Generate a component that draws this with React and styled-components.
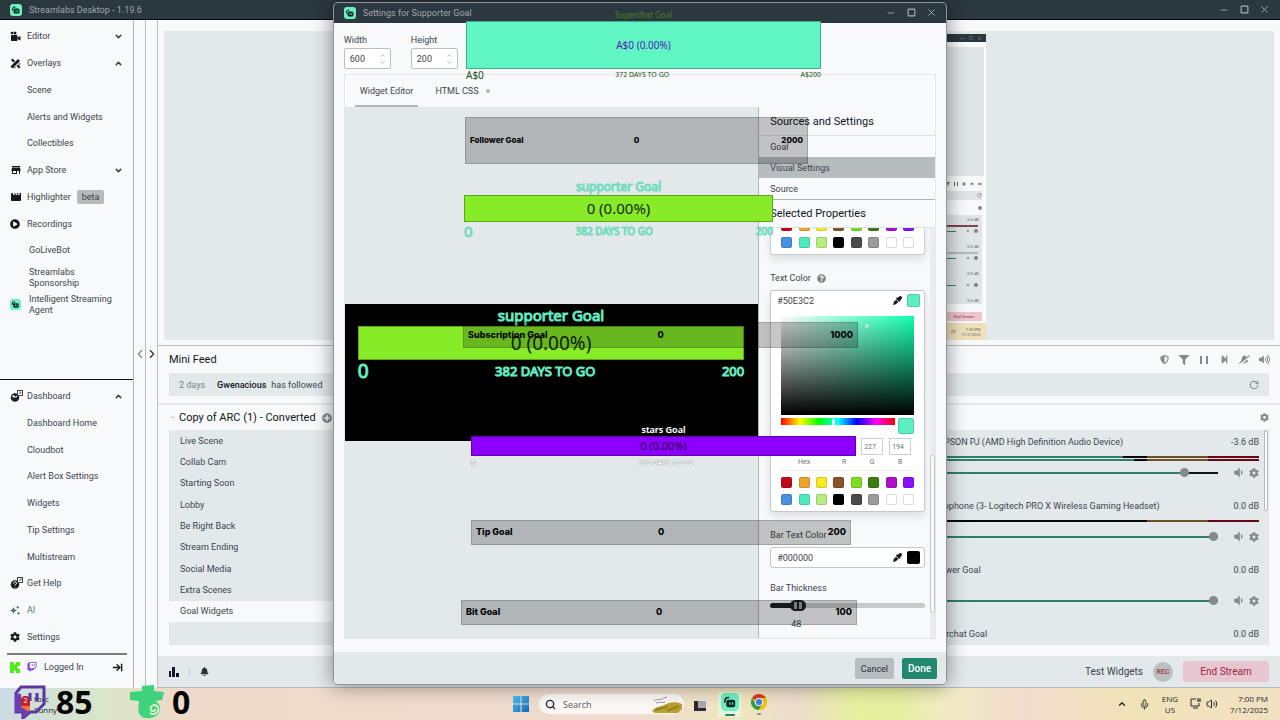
import { useState } from "react";
import styled, { createGlobalStyle } from "styled-components";
import {
  FaBell,
  FaBellSlash,
  FaCog,
  FaEyeDropper,
  FaFilter,
  FaPlayCircle,
  FaPlusCircle,
  FaQuestionCircle,
  FaShieldAlt,
  FaStepForward,
  FaTwitch,
  FaVolumeUp,
} from "react-icons/fa";
import { MdMovie, MdStore, MdVolumeDown } from "react-icons/md";
import {
  ArrowRightToLine,
  ChevronDown,
  ChevronLeft,
  ChevronRight,
  ChevronUp,
  Minus,
  Mic,
  RotateCw,
  Search,
  Square,
  Volume2,
  X,
} from "lucide-react";

const GlobalStyle = createGlobalStyle`
  * {
    box-sizing: border-box;
  }
  body {
    margin: 0;
    font-family: Roboto, "Liberation Sans", sans-serif;
    font-size: 9px;
    color: #3c454b;
    overflow: hidden;
  }
  button, input {
    font: inherit;
    color: inherit;
    margin: 0;
    padding: 0;
    border: none;
    background: none;
  }
  a {
    color: inherit;
    text-decoration: none;
  }
  ul {
    list-style: none;
    margin: 0;
    padding: 0;
  }
  h2 {
    margin: 0;
    font-size: 11px;
    font-weight: 400;
    color: #12181c;
  }
  svg {
    display: block;
    flex: none;
  }
`;

const Desktop = styled.div`
  position: relative;
  display: flex;
  flex-direction: column;
  height: 100vh;
  min-height: 720px;
`;

const TitleBar = styled.header`
  display: flex;
  align-items: center;
  gap: 7px;
  height: 20px;
  padding: 0 11px 0 10px;
  background: #2b383f;
  border-bottom: 1px solid #060a0c;
  color: #a0a7aa;
`;

const DialogTitleBar = styled(TitleBar)`
  padding-right: 10px;
  border-bottom-color: #2b383f;
`;

const WindowControls = styled.div`
  display: flex;
  gap: 10px;
  margin-left: auto;
  color: #aab1b4;
`;

const IconButton = styled.button`
  display: flex;
  align-items: center;
  justify-content: center;
  width: ${({ $size }) => $size || 10}px;
  height: ${({ $size }) => $size || 10}px;
  color: inherit;
`;

const Workspace = styled.div`
  flex: 1;
  display: flex;
  min-height: 0;
  background: #f7f9fb;
`;

/* Side navigation */

const Sidebar = styled.nav`
  display: flex;
  flex-direction: column;
  width: 134px;
  padding-top: 3px;
  border-right: 1px solid #b1b6b9;
`;

const Menu = styled.ul`
  display: grid;
  grid-auto-rows: 1fr;
  height: ${({ $height }) => $height}px;
`;

const MenuItem = styled.li`
  display: flex;
  align-items: center;
  padding: 0 10px;
`;

const MenuLink = styled.a`
  display: flex;
  align-items: center;
  flex: 1;
  color: ${({ $accent }) => ($accent ? "#4f7a70" : "#3c454b")};
`;

const MenuIcon = styled.span`
  width: 17px;
  color: #16191c;
`;

const Beta = styled.span`
  margin-left: 6px;
  padding: 0 5px;
  line-height: 14px;
  border-radius: 2px;
  background: #b5babc;
`;

const AppList = styled.ul`
  padding: 0 8px 0 10px;
`;

const AppItem = styled.li`
  display: flex;
  align-items: center;
  height: 27px;
  line-height: 11px;
`;

const AppIcon = styled.span`
  width: 19px;
`;

const DarkRule = styled.hr`
  width: ${({ $inset }) => ($inset ? "120px" : "100%")};
  height: ${({ $inset }) => ($inset ? 2 : 1)}px;
  margin: ${({ $inset }) => ($inset ? "3px auto" : "auto 0 3px")};
  border: none;
  background: ${({ $inset }) => ($inset ? "#787d80" : "#0f1315")};
`;

const LoginRow = styled.a`
  display: flex;
  align-items: center;
  gap: 7px;
  height: 18px;
  margin-bottom: 12px;
  padding: 0 10px;

  svg:last-child {
    margin-left: auto;
  }
`;

const Gutter = styled.div`
  display: flex;
  align-items: center;
  justify-content: center;
  width: 12px;
  border-right: 1px solid #b9bec1;
  color: ${({ $dark }) => ($dark ? "#2b3237" : "#80878b")};
`;

/* Studio */

const Studio = styled.main`
  flex: 1;
  display: flex;
  flex-direction: column;
  min-width: 0;
`;

const PreviewArea = styled.section`
  flex: 1;
  display: flex;
  justify-content: center;
  min-height: 0;
  margin: 11px 6px 5px;
  padding: 3px 6px 0 0;
  background: #e3e8eb;
`;

const FeedSection = styled.section`
  padding: 0 11px 7px;
  border-top: 1px solid #b9bec1;
  border-bottom: 2px solid #e3e8eb;
`;

const FeedHeader = styled.div`
  display: flex;
  align-items: center;
  gap: 10px;
  height: 27px;
  color: #83898d;

  h2 {
    margin-right: auto;
  }
`;

const MutedBell = styled(FaBellSlash)`
  transform: scaleX(-1);
`;

const FeedRow = styled.div`
  display: flex;
  align-items: center;
  gap: 12px;
  height: 23px;
  padding: 0 10px;
  background: #e3e8eb;

  time {
    color: #7b8286;
  }
  strong {
    margin-right: -7px;
    font-size: 9px;
    font-weight: 500;
    color: #12181c;
  }
  button {
    margin-left: auto;
    color: #6b7276;
  }
`;

const Columns = styled.div`
  display: grid;
  grid-template-columns: repeat(3, 1fr);
  gap: 10px;
  padding: 0 11px 11px;
`;

const PanelHeader = styled.div`
  display: flex;
  align-items: center;
  justify-content: ${({ $end }) => ($end ? "flex-end" : "flex-start")};
  gap: 3px;
  height: 25px;
  color: #83898d;

  h2 {
    margin-right: 3px;
  }
`;

const Panel = styled.div`
  height: 215px;
  background: #e3e8eb;
`;

const SceneList = styled.ul`
  display: grid;
  grid-auto-rows: 1fr;
  height: 192px;
`;

const SceneItem = styled.li`
  display: flex;
  align-items: center;
  padding-left: 11px;
  background: ${({ $active }) => ($active ? "#f7f9fb" : "transparent")};
`;

const MixerPanel = styled(Panel)`
  display: flex;
  overflow: hidden;
`;

const TrackList = styled.div`
  flex: 1;
  padding: 0 0 0 11px;
`;

const Scrollbar = styled.div`
  width: 4px;
  height: 81px;
  margin: 0 1px 0 5px;
  border: 1px solid #b3b8bb;
  border-radius: 2px;
  background: #f7f9fb;
`;

const Track = styled.div`
  height: 64px;
  padding-top: 6px;
`;

const TrackTitle = styled.div`
  display: flex;
  justify-content: space-between;
  height: 13px;
  padding-left: 6px;
  line-height: 13px;
`;

const Meters = styled.div`
  display: flex;
  flex-direction: column;
  gap: 1px;
  height: 5px;
  margin: 7px 0 5px;
`;

const Meter = styled.div`
  height: 2px;
  background: linear-gradient(
    90deg,
    #31806b ${({ $level }) => $level}%,
    #08090b ${({ $level }) => $level}% 67%,
    #6e4f2c 67% 85%,
    #6a0518 85%
  );
`;

const TrackControls = styled.div`
  display: flex;
  align-items: center;
  gap: 5px;
  height: 13px;
  color: #83898d;
`;

const VolumeSlider = styled.input`
  flex: 1;
  min-width: 0;
  height: 10px;
  margin-right: 9px;
  appearance: none;

  &::-webkit-slider-runnable-track {
    height: 2px;
    background: linear-gradient(
      90deg,
      #2f8069 ${({ value }) => value}%,
      #101416 ${({ value }) => value}%
    );
  }
  &::-webkit-slider-thumb {
    appearance: none;
    width: 9px;
    height: 9px;
    margin-top: -4px;
    border-radius: 50%;
    background: #83898d;
  }
`;

const StudioFooter = styled.footer`
  display: flex;
  align-items: center;
  gap: 10px;
  height: 32px;
  padding: 0 11px;
  background: #e3e8eb;
  border-bottom: 1px solid #b3b8bb;
`;

const FooterDivider = styled.span`
  width: 1px;
  height: 8px;
  background: #c6cbce;
`;

const TestButton = styled.button`
  margin-left: auto;
  font-size: 10px;
`;

const RecButton = styled.button`
  width: 20px;
  height: 20px;
  border-radius: 50%;
  background: #bcc0c2;
  color: #a33347;
  font-size: 7px;
  font-weight: 500;
`;

const EndButton = styled.button`
  width: 86px;
  height: 21px;
  border-radius: 2px;
  background: #e8c6cf;
  color: #9c2740;
  font-size: 10px;
`;

/* Mirrored desktop inside the canvas */

const Mirror = styled.div`
  display: flex;
  flex-direction: column;
  width: 49%;
  background: #f7f9fb;
  color: #5c6367;
  font-size: 4px;
`;

const MirrorBar = styled.div`
  display: flex;
  justify-content: flex-end;
  align-items: center;
  gap: 4px;
  height: 8px;
  padding-right: 4px;
  background: #2b383f;
  color: #a0a7aa;
`;

const MirrorCanvas = styled.div`
  flex: 1;
  margin: 5px 2px 0;
  background: #dfe4e7;
`;

const MirrorIcons = styled.div`
  display: flex;
  justify-content: flex-end;
  align-items: center;
  gap: 4px;
  height: ${({ $height }) => $height}px;
  margin-right: 4px;
  background: ${({ $fill }) => ($fill ? "#dfe4e7" : "none")};
`;

const MirrorMixer = styled.div`
  height: 89px;
  margin-right: 4px;
  padding-right: 4px;
  background: #dfe4e7;
`;

const MirrorTrack = styled.div`
  height: 27px;
  padding-top: 2px;
  text-align: right;
`;

const MirrorMeter = styled.div`
  height: 2px;
  margin: 3px 0 2px;
  background: ${({ $tone }) => $tone};
`;

const MirrorVolume = styled.div`
  display: flex;
  justify-content: flex-end;
  align-items: center;
  gap: 4px;

  &::before {
    content: "";
    flex: 1;
    height: 1px;
    margin-right: 6px;
    background: #2f8069;
  }
`;

const MirrorEnd = styled.div`
  align-self: flex-end;
  width: 80px;
  height: 9px;
  margin: 8px 4px 2px 0;
  padding-right: 8px;
  background: #ecc5cd;
  color: #9c2740;
  line-height: 9px;
  text-align: right;
`;

const MirrorTaskbar = styled.div`
  display: flex;
  justify-content: flex-end;
  align-items: center;
  gap: 5px;
  height: 17px;
  padding-right: 6px;
  background: #efe0bb;
  text-align: right;
`;

/* Taskbar */

const Taskbar = styled.footer`
  display: grid;
  grid-template-columns: 1fr auto 1fr;
  align-items: center;
  height: 32px;
  padding: 0 12px;
  background: linear-gradient(
    90deg,
    #cddbe4 0%,
    #d9e6c8 8%,
    #efd9c9 14%,
    #efdbd0 50%,
    #f0e6bd 58%,
    #ecdccd 62%,
    #e7f19f 67%,
    #e6ef9f 70%,
    #f1ebc5 74%,
    #f2dbcd 80%,
    #f1e3b8 88%,
    #f1e0c2 100%
  );
  font-family: "Open Sans", sans-serif;
  font-size: 8px;
  color: #23282b;
`;

const WeatherWidget = styled.div`
  display: flex;
  align-items: center;
  gap: 4px;
  padding-left: 9px;
  line-height: 11px;
`;

const WeatherBadge = styled.span`
  width: 9px;
  height: 16px;
  border-radius: 4px 4px 2px 2px;
  background: linear-gradient(#c61f2b 60%, #ef7440 60%);
  color: #fff;
  font-size: 7px;
  line-height: 9px;
  text-align: center;
`;

const TaskbarApps = styled.div`
  display: flex;
  align-items: center;
  gap: 10px;
`;

const SearchPill = styled.label`
  display: flex;
  align-items: center;
  gap: 7px;
  width: 145px;
  height: 20px;
  padding: 0 1px 0 6px;
  border-radius: 10px;
  background: #faf6f3;
  overflow: hidden;

  input {
    flex: 1;
    min-width: 0;
    font-size: 9px;
  }
  input::placeholder {
    color: #5b6064;
  }
`;

const RunningApp = styled.button`
  display: flex;
  flex-direction: column;
  align-items: center;
  justify-content: center;
  gap: 3px;
  width: ${({ $active }) => ($active ? 23 : 16)}px;
  height: 25px;
  background: ${({ $active }) => ($active ? "#e9f3d9" : "none")};

  &::after {
    content: "";
    width: ${({ $active }) => ($active ? 10 : 4)}px;
    height: 2px;
    border-radius: 1px;
    background: ${({ $active }) => ($active ? "#2c7a60" : "#8d8a80")};
  }
`;

const Tray = styled.div`
  display: flex;
  align-items: center;
  justify-content: flex-end;
  gap: 12px;
  line-height: 11px;
`;

const TrayLanguage = styled.span`
  text-align: center;
`;

const TrayGroup = styled.span`
  display: flex;
  gap: 5px;
`;

const Clock = styled.time`
  text-align: right;
`;

const FollowerCounts = styled.div`
  position: absolute;
  bottom: 0;
  left: 14px;
  display: flex;
  align-items: center;
  height: 37px;
  font-family: "Open Sans", sans-serif;
  font-size: 32px;
  font-weight: 700;
  line-height: 34px;
  color: #050505;
`;

const Count = styled.span`
  display: flex;
  align-items: center;
  gap: ${({ $gap }) => $gap}px;
  width: ${({ $width }) => $width}px;
`;

/* Settings dialog */

const DialogLayer = styled.div`
  position: absolute;
  inset: 0;
  display: flex;
  justify-content: center;
  padding: 2px 0 35px;
`;

const Dialog = styled.section`
  display: flex;
  flex-direction: column;
  width: 48%;
  min-width: 612px;
  border: 1px solid #8e9498;
  border-radius: 5px;
  background: #f7f9fb;
  box-shadow: 0 0 20px rgba(0, 0, 0, 0.45);
  overflow: hidden;
`;

const DialogBody = styled.div`
  flex: 1;
  display: flex;
  flex-direction: column;
  min-height: 0;
  padding: 12px 10px 13px;
`;

const SizeFields = styled.div`
  display: flex;
  gap: 20px;
`;

const SizeField = styled.label`
  display: flex;
  flex-direction: column;
  gap: 3px;
`;

const NumberBox = styled.span`
  display: flex;
  align-items: center;
  width: 47px;
  height: 21px;
  padding: 0 4px 0 5px;
  border: 1px solid #b9bec1;
  border-radius: 2px;
  background: #fff;
  color: #83898d;

  input {
    flex: 1;
    min-width: 0;
    color: #3c454b;
  }
`;

const EditorFrame = styled.div`
  flex: 1;
  display: flex;
  flex-direction: column;
  min-height: 0;
  margin-top: 5px;
  border: 1px solid #e3e8eb;
`;

const Tabs = styled.div`
  display: flex;
  gap: 12px;
  height: 32px;
  padding-left: 10px;
`;

const Tab = styled.button`
  display: flex;
  align-items: center;
  gap: 7px;
  padding: 2px 5px 0;
  border-bottom: 2px solid ${({ $active }) => ($active ? "#b0b6b9" : "transparent")};
`;

const UnsavedDot = styled.i`
  width: 4px;
  height: 4px;
  border-radius: 50%;
  background: #b0b6b9;
`;

const EditorBody = styled.div`
  flex: 1;
  display: flex;
  min-height: 0;
`;

const WidgetCanvas = styled.div`
  flex: 1;
  display: flex;
  flex-direction: column;
  justify-content: center;
  background: #e3e8eb;
  border-right: 1px solid #aeb4b7;
`;

const WidgetPreview = styled.div`
  height: 137px;
  padding: 0 14px 0 13px;
  background: #000;
`;

const Properties = styled.aside`
  display: flex;
  flex-direction: column;
  width: 176px;
  padding-top: 1px;
`;

const PropertiesTitle = styled.h2`
  height: 28px;
  padding-left: 11px;
  line-height: 28px;
  border-bottom: 1px solid #dde2e5;
`;

const PropertyTab = styled.button`
  display: block;
  width: 100%;
  height: 21px;
  padding-left: 11px;
  text-align: left;
  background: ${({ $active }) => ($active ? "#b7bcbf" : "none")};
`;

const PropertyTabs = styled.div`
  border-bottom: 1px solid #aeb4b7;
`;

const PropertiesScroll = styled.div`
  flex: 1;
  display: flex;
  min-height: 0;
  overflow: hidden;
`;

const PropertyForm = styled.div`
  flex: 1;
  min-width: 0;
  padding: 0 5px 0 11px;
`;

const PropertyTrack = styled.div`
  width: 5px;
  background: #eaedef;
`;

const PropertyThumb = styled.div`
  width: 5px;
  height: 158px;
  margin-top: 227px;
  border: 1px solid #c2c7ca;
  border-radius: 3px;
  background: #f7f9fb;
`;

const SwatchCard = styled.div`
  display: flex;
  flex-direction: column;
  justify-content: flex-end;
  height: 27px;
  padding: 0 10px;
  border: 1px solid #c9ced1;
  border-top: none;
  border-radius: 0 0 3px 3px;
  background: #fff;
  box-shadow: 0 4px 8px rgba(60, 69, 75, 0.15);
  overflow: hidden;
`;

const Swatches = styled.div`
  display: grid;
  grid-template-columns: repeat(8, 11px);
  justify-content: space-between;
  gap: 6px 0;
  padding-bottom: 6px;
`;

const Swatch = styled.button`
  width: ${({ $size }) => $size || 11}px;
  height: ${({ $size }) => $size || 11}px;
  border: 1px solid rgba(0, 0, 0, 0.14);
  border-radius: 2px;
  background: ${({ $color }) => $color};
`;

const PropertyLabel = styled.label`
  display: flex;
  align-items: center;
  gap: 6px;
  height: 12px;
  margin: ${({ $top }) => $top}px 0 6px;
  color: #3c454b;

  svg {
    color: #7d8387;
  }
`;

const ColorCard = styled.div`
  border: 1px solid #c2c7ca;
  border-radius: 3px;
  background: #fff;
  box-shadow: ${({ $open }) => ($open ? "0 4px 8px rgba(60, 69, 75, 0.15)" : "none")};
`;

const ColorInput = styled.div`
  display: flex;
  align-items: center;
  gap: 5px;
  height: 19px;
  padding: 0 4px 0 6px;

  input {
    flex: 1;
    min-width: 0;
  }
  svg {
    color: #16191c;
  }
`;

const Picker = styled.div`
  padding: 6px 10px 0;
`;

const Saturation = styled.div`
  height: 99px;
  padding: 8px 0 0 84px;
  background:
    linear-gradient(to top, #000, transparent),
    linear-gradient(to right, #fff, transparent),
    #12ffb0;
`;

const SaturationDot = styled.div`
  width: 4px;
  height: 4px;
  border: 1px solid #e6fff6;
  border-radius: 50%;
`;

const HueRow = styled.div`
  display: flex;
  justify-content: space-between;
  margin-top: 3px;
`;

const HueSlider = styled.input`
  width: 114px;
  height: 7px;
  appearance: none;
  background: linear-gradient(90deg, #f00, #ff0, #0f0, #0ff, #00f, #f0f, #f00);

  &::-webkit-slider-thumb {
    appearance: none;
    width: 3px;
    height: 6px;
    background: #f3f3f3;
    border-radius: 1px;
  }
`;

const ChannelRow = styled.div`
  display: grid;
  grid-template-columns: 1fr repeat(3, 22px);
  gap: 6px;
  margin-top: 4px;
  padding: 0 3px 4px 0;
`;

const Channel = styled.label`
  display: flex;
  flex-direction: column-reverse;
  align-items: center;
  gap: 3px;
  min-width: 0;
  font-size: 7px;
  color: #6d7377;

  input {
    width: 100%;
    height: 17px;
    padding-left: 2px;
    border: 1px solid #ccd0d3;
  }
`;

const PickerSwatches = styled.div`
  padding-top: 6px;
  border-top: 1px solid #e9ecee;
`;

const ThicknessSlider = styled.input`
  display: block;
  width: 100%;
  height: 11px;
  appearance: none;

  &::-webkit-slider-runnable-track {
    height: 5px;
    border-radius: 3px;
    background: linear-gradient(90deg, #1b2023 17%, #c6cacc 17%);
  }
  &::-webkit-slider-thumb {
    appearance: none;
    width: 16px;
    height: 11px;
    margin-top: -3px;
    border: 2px solid #1b2023;
    border-radius: 6px;
    background: linear-gradient(
      90deg,
      #1b2023 2px,
      #9aa0a3 2px 5px,
      #1b2023 5px 7px,
      #9aa0a3 7px 10px,
      #1b2023 10px
    );
  }
`;

const SliderValue = styled.output`
  display: block;
  width: 52px;
  margin-top: 8px;
  text-align: center;
`;

const DialogFooter = styled.footer`
  display: flex;
  align-items: center;
  justify-content: flex-end;
  gap: 8px;
  height: 32px;
  padding: 1px 9px 0;
  background: #e3e8eb;
`;

const ActionButton = styled.button`
  height: 21px;
  padding: 0 6px;
  border-radius: 2px;
  background: ${({ $primary }) => ($primary ? "#22886f" : "#b7bdc0")};
  color: ${({ $primary }) => ($primary ? "#fff" : "#2b3237")};
  font-size: ${({ $primary }) => ($primary ? 10 : 9)}px;
  font-weight: ${({ $primary }) => ($primary ? 500 : 400)};
`;

/* Stream goals drawn over the desktop */

const GoalStage = styled.div`
  position: absolute;
  top: 0;
  left: 50%;
  width: 612px;
  margin-left: -306px;
  pointer-events: none;
`;

const PlacedGoal = styled.div`
  position: absolute;
  top: ${({ $top }) => $top}px;
  left: ${({ $left }) => $left}px;
  width: ${({ $width }) => $width}px;
`;

const ShadeBar = styled.div`
  display: grid;
  grid-template-columns: 1fr auto 1fr;
  align-items: center;
  height: ${({ $height }) => $height}px;
  padding: 0 4px 2px;
  border: 1px solid rgba(0, 0, 0, 0.16);
  background: rgba(0, 0, 0, 0.22);
  color: #050505;
  font-family: Inter, sans-serif;
  font-size: ${({ $height }) => ($height > 40 ? 8 : 9)}px;
  font-weight: 800;

  span:last-child {
    text-align: right;
  }
`;

const Goal = styled.div`
  font-family: "Noto Sans", "Open Sans", sans-serif;
  color: ${({ $text }) => $text};
  white-space: nowrap;
  font-weight: ${({ $weight }) => $weight || 400};
  -webkit-text-stroke: ${({ $stroke }) => $stroke || 0}px currentColor;
  text-shadow: ${({ $outline }) => ($outline ? "0 0 1px " + $outline : "none")};
`;

const GoalTitle = styled.div`
  line-height: ${({ $line }) => $line}px;
  font-size: ${({ $size }) => $size}px;
  color: ${({ $color }) => $color || "inherit"};
  text-align: center;
`;

const GoalBar = styled.div`
  height: ${({ $height }) => $height}px;
  border: 1px solid rgba(0, 0, 0, 0.3);
  background: ${({ $fill }) => $fill};
  color: ${({ $color }) => $color};
  font-size: ${({ $size }) => $size}px;
  font-weight: 400;
  line-height: ${({ $height }) => $height - 2}px;
  text-align: center;
  text-shadow: none;
  -webkit-text-stroke: 0;
`;

const GoalFoot = styled.div`
  display: flex;
  align-items: center;
  justify-content: space-between;
  height: ${({ $line }) => $line}px;
  font-size: ${({ $size }) => $size}px;

  span:first-child {
    font-size: ${({ $start }) => $start}px;
  }
`;

const StreamlabsIcon = ({ size = 12 }) => (
  <svg width={size} height={size} viewBox="0 0 24 24" aria-hidden="true">
    <rect width="24" height="24" rx="6" fill="#6df0c2" />
    <rect x="7" y="9" width="12" height="10" rx="3" fill="#0c2b26" />
    <path d="M5 12c0-4 2-6 5-6" stroke="#0c2b26" strokeWidth="2.2" fill="none" strokeLinecap="round" />
    <path d="M12 13v2M15.5 13v2" stroke="#6df0c2" strokeWidth="1.600" strokeLinecap="round" />
  </svg>
);

const CameraIcon = () => (
  <svg width="11" height="11" viewBox="0 0 22 22" fill="currentColor" aria-hidden="true">
    <circle cx="4" cy="4" r="2.6" />
    <circle cx="10" cy="3.8" r="3" />
    <rect x="2" y="8" width="13" height="12" rx="1.5" />
    <path d="M15 13l6-3v9l-6-3z" />
  </svg>
);

const WandIcon = () => (
  <svg width="11" height="11" viewBox="0 0 22 22" fill="currentColor" aria-hidden="true">
    <path d="M1 17L16 2l4 4L5 21z" />
    <path d="M2 4l3-3 5 5-3 3zM13 16l3-3 5 5-3 3z" />
    <circle cx="19" cy="12" r="1.6" />
    <circle cx="10" cy="19" r="1.4" />
  </svg>
);

const LinkedIcon = ({ help }) => (
  <svg width="13" height="13" viewBox="0 0 26 26" aria-hidden="true">
    <circle cx="10" cy="15" r="8.5" fill="#1b2023" />
    {help ? (
      <path d="M7 13c0-4 6-4 6-.5 0 2.500-3 2-3 4.500M10 20v1" stroke="#fff" strokeWidth="2" fill="none" />
    ) : (
      <path d="M4 14c2-5 5-4 6 0l5-4c0 4-3 6-6 5z" fill="#fff" />
    )}
    <rect x="15" y="1" width="10" height="10" fill="#fff" stroke="#3c454b" strokeWidth="2" />
    <path d="M17.500 8.500l4-4M19 4h3v3" stroke="#3c454b" strokeWidth="1.500" fill="none" />
  </svg>
);

const SparkleIcon = () => (
  <svg width="10" height="10" viewBox="0 0 20 20" fill="#3f6f64" aria-hidden="true">
    <path d="M7 4l2.200 4.800L14 11l-4.800 2.200L7 18l-2.200-4.800L0 11l4.800-2.200z" />
    <path d="M15.500 1l1.200 2.300L19 4.500l-2.300 1.200L15.500 8l-1.200-2.300L12 4.500l2.300-1.200zM17 13l1.200 2.300 2.300 1.200-2.300 1.200L17 20l-1.200-2.300-2.300-1.200 2.300-1.200z" />
  </svg>
);

const KickIcon = () => (
  <svg width="10" height="11" viewBox="0 0 10 11" fill="#4bef17" aria-hidden="true">
    <path d="M0 0h4v3h1V2h1V0h4v4H8v1H7v1h1v1h2v4H6V9H5V8H4v3H0z" />
  </svg>
);

const BarsIcon = () => (
  <svg width="10" height="10" viewBox="0 0 10 10" fill="#11162c" aria-hidden="true">
    <path d="M0 4h2v6H0zM3 0h3v10H3zM7 6h3v4H7z" />
  </svg>
);

const PauseIcon = () => (
  <svg width="8" height="10" viewBox="0 0 8 10" fill="currentColor" aria-hidden="true">
    <path d="M0 1h2v8H0zM6 1h2v8H6z" />
  </svg>
);

const WindowsIcon = () => (
  <svg width="16" height="16" viewBox="0 0 16 16" aria-hidden="true">
    <defs>
      <linearGradient id="win" x1="0" y1="0" x2="1" y2="1">
        <stop offset="0" stopColor="#4cc3f0" />
        <stop offset="1" stopColor="#1367b8" />
      </linearGradient>
    </defs>
    <path d="M0 0h7.500v7.500H0zM8.500 0H16v7.500H8.500zM0 8.500h7.500V16H0zM8.500 8.500H16V16H8.500z" fill="url(#win)" />
  </svg>
);

const HillsIcon = () => (
  <svg width="31" height="18" viewBox="0 0 31 18" aria-hidden="true">
    <path d="M2 6c4-3 5 0 8-2 2-2 4-1 5-2M4 8c3-1 6 0 9-1" stroke="#9c8fa5" strokeWidth="1" fill="none" />
    <path d="M0 16c4-5 8-4 12-6 5-3 12-4 18-1v5l-4 4H3z" fill="#b9a02e" />
    <path d="M3 15c5-2 9-1 13-4M15 16c4-3 8-2 12-5" stroke="#7f7a20" strokeWidth="1.500" fill="none" />
  </svg>
);

const TaskViewIcon = () => (
  <svg width="14" height="13" viewBox="0 0 14 13" aria-hidden="true">
    <rect x="4" y="0" width="10" height="9" fill="#e4e2e2" />
    <path d="M0 3h4v7h8v3H0z" fill="#2b2a2c" />
    <rect x="4" y="3" width="8" height="7" fill="#aaa7a7" />
  </svg>
);

const ChromeIcon = () => (
  <svg width="16" height="16" viewBox="0 0 16 16" aria-hidden="true">
    <circle cx="8" cy="8" r="8" fill="#f4c20d" />
    <path d="M8 8L1.100 4A8 8 0 0 1 14.900 4H8z" fill="#d93a2b" />
    <path d="M1.100 4A8 8 0 0 0 8 16l3.500-6L8 8 4.500 10z" fill="#2f9e4f" />
    <path d="M8 4h6.900A8 8 0 0 1 8 16l3.500-6z" fill="#f4c20d" />
    <circle cx="8" cy="8" r="4" fill="#fff" />
    <circle cx="8" cy="8" r="3.100" fill="#3b7ded" />
  </svg>
);

const DisplayIcon = () => (
  <svg width="11" height="11" viewBox="0 0 11 11" fill="none" stroke="currentColor" aria-hidden="true">
    <path d="M6 1H1v7h8V5M3 10h5M8 0v3M10 0v3M7 3h4" />
  </svg>
);

const TwitchMark = () => (
  <svg width="32" height="34" viewBox="0 0 32 34" aria-hidden="true">
    <path d="M7 2h23v17l-8 8h-6l-7 6v-6H2V8z" fill="none" stroke="#5d35a3" strokeWidth="3" />
    <path d="M1 8v19h8v6l6-6-8-5V9z" fill="#6a3fb5" />
    <path d="M16 8v8M23 8v8" stroke="#5d35a3" strokeWidth="3" />
  </svg>
);

const FloatMark = () => (
  <svg width="34" height="34" viewBox="0 0 34 34" aria-hidden="true">
    <path d="M12 1l12-1v6l10 1-2 8-7 1c5 2 7 8 3 13-4 5-14 6-18 1-3-4-1-9-1-14l-9-1V7l12-1z" fill="#3fd37d" />
    <path d="M28 22c-3-4-9-1-7 3 1 2 5 1 4-1M28 22c2 5-4 9-8 6" stroke="#e7efce" strokeWidth="1.800" fill="none" />
  </svg>
);

const swatchColors = [
  "#c00a1c", "#f0a22e", "#f6ea22", "#875426", "#7ddb20", "#3f7c10", "#ae10c9", "#8a10fa",
  "#4a90e2", "#50eabf", "#b8ee80", "#000000", "#4a4a4a", "#9b9b9b", "#ffffff", "#ffffff",
];

const scenes = [
  "Live Scene",
  "Collab Cam",
  "Starting Soon",
  "Lobby",
  "Be Right Back",
  "Stream Ending",
  "Social Media",
  "Extra Scenes",
  "Goal Widgets",
];

const mainMenu = [
  { label: "Editor", icon: <CameraIcon />, open: false },
  { label: "Overlays", icon: <WandIcon />, open: true },
  { label: "Scene" },
  { label: "Alerts and Widgets" },
  { label: "Collectibles" },
  { label: "App Store", icon: <MdStore size={12} />, open: false },
  { label: "Highlighter", icon: <MdMovie size={12} />, beta: true },
  { label: "Recordings", icon: <FaPlayCircle size={10} /> },
];

const dashboardMenu = [
  { label: "Dashboard", icon: <LinkedIcon />, open: true },
  { label: "Dashboard Home" },
  { label: "Cloudbot" },
  { label: "Alert Box Settings" },
  { label: "Widgets" },
  { label: "Tip Settings" },
  { label: "Multistream" },
  { label: "Get Help", icon: <LinkedIcon help /> },
  { label: "AI", icon: <SparkleIcon />, accent: true },
  { label: "Settings", icon: <FaCog size={10} /> },
];

const initialTracks = [
  { name: "(2- EPSON PJ (AMD High Definition Audio Device)", db: "-3.6 dB", meters: [60, 63], volume: 90 },
  { name: "Microphone (3- Logitech PRO X Wireless Gaming Headset)", db: "0.0 dB", meters: [0], volume: 100 },
  { name: "Follower Goal", db: "0.0 dB", meters: [], volume: 100 },
  { name: "Superchat Goal", db: "0.0 dB", meters: [], volume: 100 },
];

const shadeGoals = [
  { name: "Follower Goal", target: "2000", top: 117, left: 131, width: 343, height: 47 },
  { name: "Subscription Goal", target: "1000", top: 322, left: 129, width: 395, height: 26 },
  { name: "Tip Goal", target: "200", top: 520, left: 137, width: 380, height: 25 },
  { name: "Bit Goal", target: "100", top: 600, left: 127, width: 396, height: 25 },
];

const Controls = ({ size = 10 }) => (
  <WindowControls>
    <IconButton aria-label="Minimize"><Minus size={size} /></IconButton>
    <IconButton aria-label="Maximize"><Square size={size - 1} strokeWidth={3} /></IconButton>
    <IconButton aria-label="Close"><X size={size + 1} /></IconButton>
  </WindowControls>
);

const NavMenu = ({ items, height }) => (
  <Menu $height={height}>
    {items.map((item) => (
      <MenuItem key={item.label}>
        <MenuLink href="#" $accent={item.accent}>
          <MenuIcon>{item.icon}</MenuIcon>
          {item.label}
          {item.beta && <Beta>beta</Beta>}
        </MenuLink>
        {item.open === true && <ChevronUp size={9} strokeWidth={4} />}
        {item.open === false && <ChevronDown size={9} strokeWidth={4} />}
      </MenuItem>
    ))}
  </Menu>
);

const PauseMini = () => (
  <svg width="4" height="4" viewBox="0 0 4 4" fill="currentColor" aria-hidden="true">
    <path d="M0 0h1v4H0zM3 0h1v4H3z" />
  </svg>
);

const MirroredDesktop = () => (
  <Mirror>
    <MirrorBar>
      <Minus size={5} />
      <Square size={4} />
      <X size={5} />
    </MirrorBar>
    <MirrorCanvas />
    <MirrorIcons $height={15}>
      <FaFilter size={4} />
      <PauseMini />
      <FaStepForward size={4} />
      <FaBellSlash size={4} />
      <FaVolumeUp size={4} />
    </MirrorIcons>
    <MirrorIcons $height={9} $fill>
      <RotateCw size={5} />
    </MirrorIcons>
    <MirrorIcons $height={15}>
      <FaCog size={4} />
    </MirrorIcons>
    <MirrorMixer>
      {["#7a4453", "#b3b8bb", "transparent", null].map((tone, i) => (
        <MirrorTrack key={i}>
          {i === 0 ? "-3.6 dB" : "0.0 dB"}
          {tone && (
            <>
              <MirrorMeter $tone={tone} />
              <MirrorVolume>
                <MdVolumeDown size={4} />
                <FaCog size={4} />
              </MirrorVolume>
            </>
          )}
        </MirrorTrack>
      ))}
    </MirrorMixer>
    <MirrorEnd>End Stream</MirrorEnd>
    <MirrorTaskbar>
      <Volume2 size={5} />
      <span>
        7:00 PM
        <br />
        7/12/2025
      </span>
    </MirrorTaskbar>
  </Mirror>
);

const SwatchGrid = () => (
  <Swatches>
    {swatchColors.map((color, i) => (
      <Swatch key={i} $color={color} aria-label={color} />
    ))}
  </Swatches>
);

const ProgressGoal = ({ goal }) => (
  <Goal $text={goal.text} $weight={goal.weight} $stroke={goal.stroke} $outline={goal.outline}>
    <GoalTitle $size={goal.titleSize} $line={goal.titleLine} $color={goal.titleColor}>
      {goal.title}
    </GoalTitle>
    <GoalBar $height={goal.barHeight} $fill={goal.fill} $color={goal.valueColor} $size={goal.valueSize}>
      {goal.value}
    </GoalBar>
    <GoalFoot $line={goal.footLine} $size={goal.footSize} $start={goal.startSize}>
      <span>{goal.start}</span>
      <span>{goal.days}</span>
      <span>{goal.target}</span>
    </GoalFoot>
  </Goal>
);

const supporterGoal = {
  title: "supporter Goal",
  value: "0 (0.00%)",
  start: "0",
  days: "382 DAYS TO GO",
  target: "200",
  text: "#62ecc4",
  stroke: 1,
  fill: "#87eb28",
  valueColor: "#16280a",
};

const largeSupporter = {
  ...supporterGoal,
  titleSize: 15,
  titleLine: 22,
  barHeight: 34,
  valueSize: 19,
  footLine: 22,
  footSize: 13,
  startSize: 19,
};

const smallSupporter = {
  ...supporterGoal,
  text: "#74dcbd",
  titleSize: 12,
  titleLine: 17,
  barHeight: 27,
  valueSize: 15,
  footLine: 17,
  footSize: 10,
  startSize: 15,
};

const superchat = {
  title: "Superchat Goal",
  value: "A$0 (0.00%)",
  start: "A$0",
  days: "372 DAYS TO GO",
  target: "A$200",
  text: "#214d10",
  titleColor: "#4a8220",
  fill: "#5ff6c4",
  valueColor: "#5420b4",
  titleSize: 8,
  titleLine: 12,
  barHeight: 48,
  valueSize: 10,
  footLine: 11,
  footSize: 7,
  startSize: 10,
};

const stars = {
  title: "stars Goal",
  value: "0 (0.00%)",
  start: "0",
  days: "382 DAYS TO GO",
  target: "",
  text: "#ffffff",
  weight: 600,
  outline: "#555",
  fill: "#8a00fa",
  valueColor: "#2b0752",
  titleSize: 9,
  titleLine: 12,
  barHeight: 20,
  valueSize: 11,
  footLine: 12,
  footSize: 7,
  startSize: 9,
};

const App = () => {
  const [tracks, setTracks] = useState(initialTracks);
  const [size, setSize] = useState({ width: "600", height: "200" });
  const [textColor, setTextColor] = useState("#50E3C2");
  const [barTextColor, setBarTextColor] = useState("#000000");
  const [thickness, setThickness] = useState(48);

  const changeVolume = (index, volume) => {
    setTracks(tracks.map((track, i) => (i === index ? { ...track, volume } : track)));
  };

  return (
    <>
      <GlobalStyle />
      <Desktop>
        <TitleBar>
          <StreamlabsIcon />
          <span>Streamlabs Desktop - 1.19.6</span>
          <Controls />
        </TitleBar>

        <Workspace>
          <Sidebar>
            <NavMenu items={mainMenu} height={214} />
            <AppList>
              <AppItem><AppIcon />GoLiveBot</AppItem>
              <AppItem><AppIcon />Streamlabs<br />Sponsorship</AppItem>
              <AppItem>
                <AppIcon><StreamlabsIcon size={11} /></AppIcon>
                Intelligent Streaming<br />Agent
              </AppItem>
            </AppList>
            <DarkRule />
            <NavMenu items={dashboardMenu} height={267} />
            <DarkRule $inset />
            <LoginRow href="#">
              <KickIcon />
              <FaTwitch size={10} color="#8045dd" />
              <span>Logged In</span>
              <ArrowRightToLine size={11} strokeWidth={3} color="#16191c" />
            </LoginRow>
          </Sidebar>
          <Gutter><ChevronLeft size={14} /></Gutter>
          <Gutter $dark><ChevronRight size={14} /></Gutter>

          <Studio>
            <PreviewArea>
              <MirroredDesktop />
            </PreviewArea>

            <FeedSection>
              <FeedHeader>
                <h2>Mini Feed</h2>
                <IconButton aria-label="Safe mode"><FaShieldAlt size={9} /></IconButton>
                <IconButton aria-label="Filter"><FaFilter size={10} /></IconButton>
                <IconButton aria-label="Pause"><PauseIcon /></IconButton>
                <IconButton aria-label="Skip"><FaStepForward size={9} /></IconButton>
                <IconButton aria-label="Mute alerts"><MutedBell size={11} /></IconButton>
                <IconButton aria-label="Volume"><FaVolumeUp size={11} /></IconButton>
              </FeedHeader>
              <FeedRow>
                <time>2 days</time>
                <strong>Gwenacious</strong>
                <span>has followed</span>
                <IconButton aria-label="Replay"><RotateCw size={10} /></IconButton>
              </FeedRow>
            </FeedSection>

            <Columns>
              <section>
                <PanelHeader>
                  <ChevronDown size={7} />
                  <h2>Copy of ARC (1) - Converted</h2>
                  <IconButton aria-label="Add scene"><FaPlusCircle size={10} /></IconButton>
                </PanelHeader>
                <Panel>
                  <SceneList>
                    {scenes.map((scene) => (
                      <SceneItem key={scene} $active={scene === "Goal Widgets"}>{scene}</SceneItem>
                    ))}
                  </SceneList>
                </Panel>
              </section>
              <section>
                <PanelHeader />
                <Panel />
              </section>
              <section>
                <PanelHeader $end>
                  <IconButton aria-label="Mixer settings">
                    <FaCog size={9} />
                  </IconButton>
                </PanelHeader>
                <MixerPanel>
                  <TrackList>
                    {tracks.map((track, i) => (
                      <Track key={track.name}>
                        <TrackTitle>
                          <span>{track.name}</span>
                          <span>{track.db}</span>
                        </TrackTitle>
                        <Meters>
                          {track.meters.map((level, n) => (
                            <Meter key={n} $level={level} />
                          ))}
                        </Meters>
                        <TrackControls>
                          <VolumeSlider
                            type="range"
                            aria-label={track.name}
                            value={track.volume}
                            onChange={(e) => changeVolume(i, Number(e.target.value))}
                          />
                          <IconButton $size={12} aria-label="Mute"><MdVolumeDown size={15} /></IconButton>
                          <IconButton aria-label="Source settings"><FaCog size={10} /></IconButton>
                        </TrackControls>
                      </Track>
                    ))}
                  </TrackList>
                  <Scrollbar />
                </MixerPanel>
              </section>
            </Columns>

            <StudioFooter>
              <BarsIcon />
              <FooterDivider />
              <FaBell size={9} color="#2b3237" />
              <TestButton>Test Widgets</TestButton>
              <RecButton>REC</RecButton>
              <EndButton>End Stream</EndButton>
            </StudioFooter>
          </Studio>
        </Workspace>

        <Taskbar>
          <WeatherWidget>
            <WeatherBadge>2</WeatherBadge>
            <span>tbrc<br />Sunny</span>
          </WeatherWidget>
          <TaskbarApps>
            <WindowsIcon />
            <SearchPill>
              <Search size={11} strokeWidth={3} />
              <input type="text" placeholder="Search" aria-label="Search" />
              <HillsIcon />
            </SearchPill>
            <TaskViewIcon />
            <RunningApp $active aria-label="Streamlabs"><StreamlabsIcon size={18} /></RunningApp>
            <RunningApp aria-label="Chrome"><ChromeIcon /></RunningApp>
          </TaskbarApps>
          <Tray>
            <ChevronUp size={10} strokeWidth={3} />
            <Mic size={11} />
            <TrayLanguage>ENG<br />US</TrayLanguage>
            <TrayGroup>
              <DisplayIcon />
              <Volume2 size={12} />
            </TrayGroup>
            <Clock>7:00 PM<br />7/12/2025</Clock>
          </Tray>
        </Taskbar>

        <DialogLayer>
          <Dialog role="dialog" aria-label="Settings for Supporter Goal">
            <DialogTitleBar as="div">
              <StreamlabsIcon />
              <span>Settings for Supporter Goal</span>
              <Controls />
            </DialogTitleBar>
            <DialogBody>
              <SizeFields>
                {["width", "height"].map((side) => (
                  <SizeField key={side}>
                    {side === "width" ? "Width" : "Height"}
                    <NumberBox>
                      <input
                        type="text"
                        value={size[side]}
                        onChange={(e) => setSize({ ...size, [side]: e.target.value })}
                      />
                      <span>
                        <ChevronUp size={7} />
                        <ChevronDown size={7} />
                      </span>
                    </NumberBox>
                  </SizeField>
                ))}
              </SizeFields>

              <EditorFrame>
                <Tabs>
                  <Tab $active>Widget Editor</Tab>
                  <Tab>HTML CSS <UnsavedDot /></Tab>
                </Tabs>
                <EditorBody>
                  <WidgetCanvas>
                    <WidgetPreview>
                      <ProgressGoal goal={largeSupporter} />
                    </WidgetPreview>
                  </WidgetCanvas>
                  <Properties>
                    <PropertiesTitle>Sources and Settings</PropertiesTitle>
                    <PropertyTabs>
                      <PropertyTab>Goal</PropertyTab>
                      <PropertyTab $active>Visual Settings</PropertyTab>
                      <PropertyTab>Source</PropertyTab>
                    </PropertyTabs>
                    <PropertiesTitle>Selected Properties</PropertiesTitle>
                    <PropertiesScroll>
                      <PropertyForm>
                        <SwatchCard>
                          <SwatchGrid />
                        </SwatchCard>

                        <PropertyLabel htmlFor="text-color" $top={17}>
                          Text Color <FaQuestionCircle size={9} />
                        </PropertyLabel>
                        <ColorCard $open>
                          <ColorInput>
                            <input
                              id="text-color"
                              value={textColor}
                              onChange={(e) => setTextColor(e.target.value)}
                            />
                            <FaEyeDropper size={9} />
                            <Swatch $size={13} $color="#5deec2" aria-label="Text color" />
                          </ColorInput>
                          <Picker>
                            <Saturation><SaturationDot /></Saturation>
                            <HueRow>
                              <HueSlider type="range" aria-label="Hue" min="0" max="360" defaultValue="166" />
                              <Swatch $size={16} $color="#5deec2" aria-label="Current color" />
                            </HueRow>
                            <ChannelRow>
                              <Channel>Hex<input defaultValue="50E3C2" /></Channel>
                              <Channel>R<input defaultValue="80" /></Channel>
                              <Channel>G<input defaultValue="227" /></Channel>
                              <Channel>B<input defaultValue="194" /></Channel>
                            </ChannelRow>
                            <PickerSwatches>
                              <SwatchGrid />
                            </PickerSwatches>
                          </Picker>
                        </ColorCard>

                        <PropertyLabel htmlFor="bar-text-color" $top={17}>Bar Text Color</PropertyLabel>
                        <ColorCard>
                          <ColorInput>
                            <input
                              id="bar-text-color"
                              value={barTextColor}
                              onChange={(e) => setBarTextColor(e.target.value)}
                            />
                            <FaEyeDropper size={9} />
                            <Swatch $size={13} $color="#000000" aria-label="Bar text color" />
                          </ColorInput>
                        </ColorCard>

                        <PropertyLabel htmlFor="bar-thickness" $top={14}>Bar Thickness</PropertyLabel>
                        <ThicknessSlider
                          id="bar-thickness"
                          type="range"
                          min="32"
                          max="144"
                          value={thickness}
                          onChange={(e) => setThickness(e.target.value)}
                        />
                        <SliderValue htmlFor="bar-thickness">{thickness}</SliderValue>
                      </PropertyForm>
                      <PropertyTrack>
                        <PropertyThumb />
                      </PropertyTrack>
                    </PropertiesScroll>
                  </Properties>
                </EditorBody>
              </EditorFrame>
            </DialogBody>
            <DialogFooter>
              <ActionButton>Cancel</ActionButton>
              <ActionButton $primary>Done</ActionButton>
            </DialogFooter>
          </Dialog>
        </DialogLayer>

        <GoalStage>
          <PlacedGoal $top={9} $left={132} $width={355}>
            <ProgressGoal goal={superchat} />
          </PlacedGoal>
          <PlacedGoal $top={178} $left={130} $width={309}>
            <ProgressGoal goal={smallSupporter} />
          </PlacedGoal>
          <PlacedGoal $top={424} $left={137} $width={385}>
            <ProgressGoal goal={stars} />
          </PlacedGoal>
          {shadeGoals.map((goal) => (
            <PlacedGoal key={goal.name} $top={goal.top} $left={goal.left} $width={goal.width}>
              <ShadeBar $height={goal.height}>
                <span>{goal.name}</span>
                <span>0</span>
                <span>{goal.target}</span>
              </ShadeBar>
            </PlacedGoal>
          ))}
        </GoalStage>

        <FollowerCounts>
          <Count $width={116} $gap={10}><TwitchMark />85</Count>
          <Count $width={70} $gap={8}><FloatMark />0</Count>
        </FollowerCounts>
      </Desktop>
    </>
  );
};

export default App;
